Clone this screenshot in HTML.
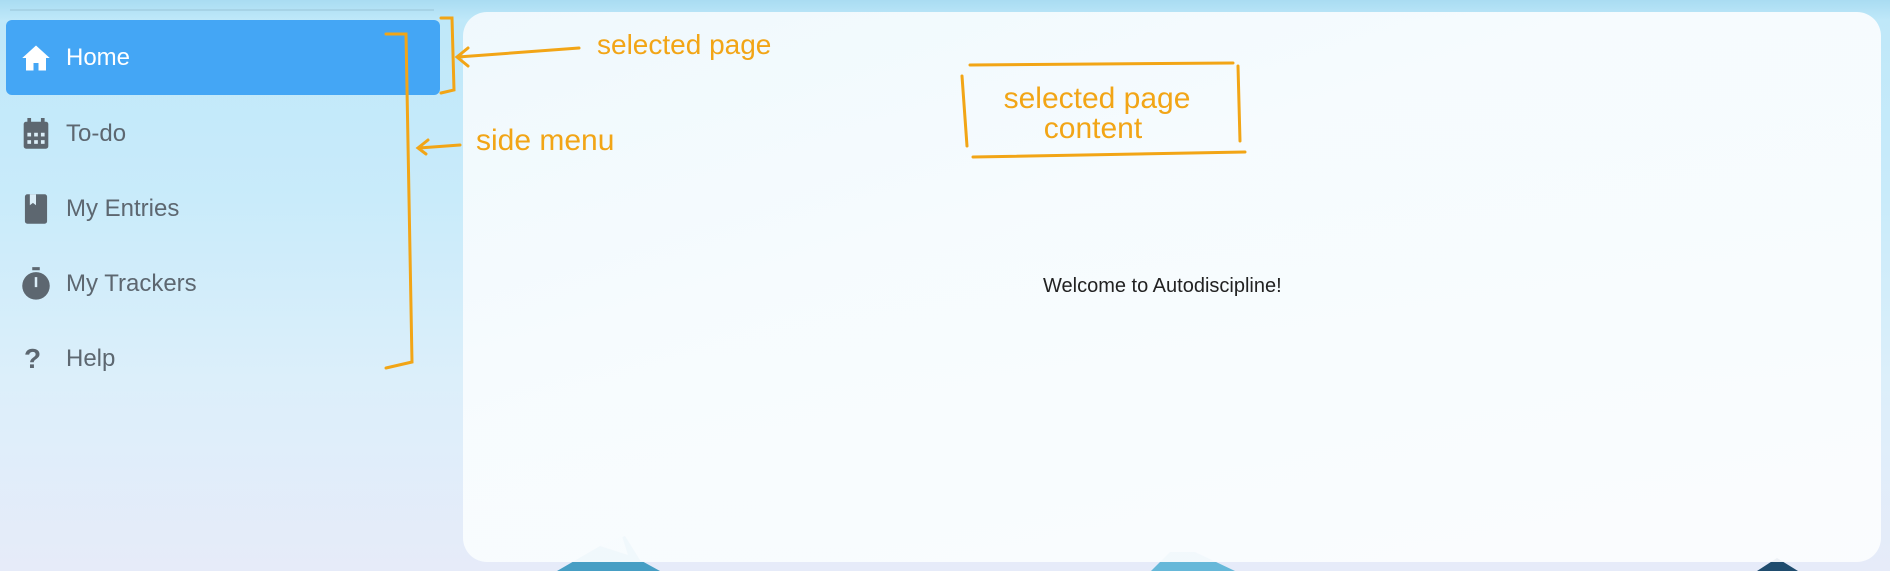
<!DOCTYPE html>
<html><head><meta charset="utf-8"><style>
*{margin:0;padding:0;box-sizing:border-box}
body{width:1890px;height:571px;overflow:hidden;position:relative;font-family:"Liberation Sans",sans-serif;
background:linear-gradient(180deg,#a9dcf2 0px,#bfe8f9 20px,#c9ebfa 200px,#dceffa 380px,#e6ebf9 571px);}
.topline{position:absolute;left:10px;top:9px;width:424px;height:2px;background:#a7d3e6}
.sel{position:absolute;left:6px;top:20px;width:434px;height:75px;background:#44a6f5;border-radius:6px}
.item{position:absolute;left:66px;font-size:24px;color:#5d6770;line-height:30px}
.ico{position:absolute;left:21px}
.panel{position:absolute;left:463px;top:12px;width:1418px;height:550px;border-radius:24px;
background:linear-gradient(160deg,rgba(241,249,253,.97) 0%,rgba(248,252,254,.96) 40%,rgba(252,253,255,.93) 100%)}
.welcome{position:absolute;left:1043px;top:275px;font-size:20px;color:#222}
.hand{font-family:"Liberation Sans Narrow","Liberation Sans",sans-serif;fill:#f2a516}
</style></head><body>
<svg style="position:absolute;left:0;top:0" width="1890" height="571">
<path d="M557 571 L600 546 L625 536 L640 560 L660 571Z" fill="#469ec4"/>
<path d="M600 546 L622 536 L628 555 Z" fill="#d6ebf2"/>
<path d="M1151 571 L1170 552 L1195 552 L1235 571Z" fill="#66b8d9"/>
<path d="M1757 571 L1777 558 L1798 571Z" fill="#1f4c6e"/>
</svg>
<div class="topline"></div>
<div class="sel"></div>
<svg class="ico" style="top:44px" width="30" height="28" viewBox="0 0 24 22"><path d="M12 1L1 11h3v10h6v-6h4v6h6V11h3z" fill="#fff"/></svg>
<div class="item" style="top:43px;color:#fff">Home</div>
<svg class="ico" style="top:118px" width="30" height="32" viewBox="0 0 24 26"><rect x="2" y="3" width="20" height="22" rx="2" fill="#5d6770"/><rect x="5" y="0" width="3" height="5" fill="#5d6770"/><rect x="16" y="0" width="3" height="5" fill="#5d6770"/><g fill="#dbeef8"><rect x="5" y="12" width="3" height="3"/><rect x="10.5" y="12" width="3" height="3"/><rect x="16" y="12" width="3" height="3"/><rect x="5" y="18" width="3" height="3"/><rect x="10.5" y="18" width="3" height="3"/><rect x="16" y="18" width="3" height="3"/></g></svg>
<div class="item" style="top:119px">To-do</div>
<svg class="ico" style="top:193px" width="30" height="32" viewBox="0 0 24 26"><rect x="3" y="1" width="18" height="24" rx="2" fill="#5d6770"/><path d="M7 1v9l2.5-2 2.5 2V1z" fill="#dbeef8"/></svg>
<div class="item" style="top:194px">My Entries</div>
<svg class="ico" style="top:267px" width="30" height="34" viewBox="0 0 24 27"><rect x="9" y="0" width="6" height="2.5" fill="#5d6770"/><circle cx="12" cy="15" r="11" fill="#5d6770"/><rect x="11" y="8" width="2" height="8" fill="#dbeef8"/></svg>
<div class="item" style="top:269px">My Trackers</div>
<div class="item" style="top:344px;left:24px;font-weight:bold;font-size:28px">?</div>
<div class="item" style="top:344px">Help</div>
<div class="panel"></div>
<div class="welcome">Welcome to Autodiscipline!</div>
<svg style="position:absolute;left:0;top:0" width="1890" height="571">
<g fill="none" stroke="#f2a516" stroke-width="3" stroke-linecap="round">
<path d="M386 34 L406 34 L412 362 L386 368"/>
<path d="M441 18 L452 18 L454 90 L441 93"/>
<path d="M579 48 L458 57 M468 48 L457 57 L468 66"/>
<path d="M460 145 L419 148 M428 140 L418 148 L426 154"/>
<path d="M970 65 L1233 63 M962 76 L967 146 M1238 66 L1240 141 M973 157 L1245 152"/>
</g>
<text class="hand" x="597" y="54" font-size="28">selected page</text>
<text class="hand" x="476" y="150" font-size="30">side menu</text>
<text class="hand" x="1097" y="108" font-size="30" text-anchor="middle">selected page</text>
<text class="hand" x="1093" y="138" font-size="30" text-anchor="middle">content</text>
</svg>
</body></html>
